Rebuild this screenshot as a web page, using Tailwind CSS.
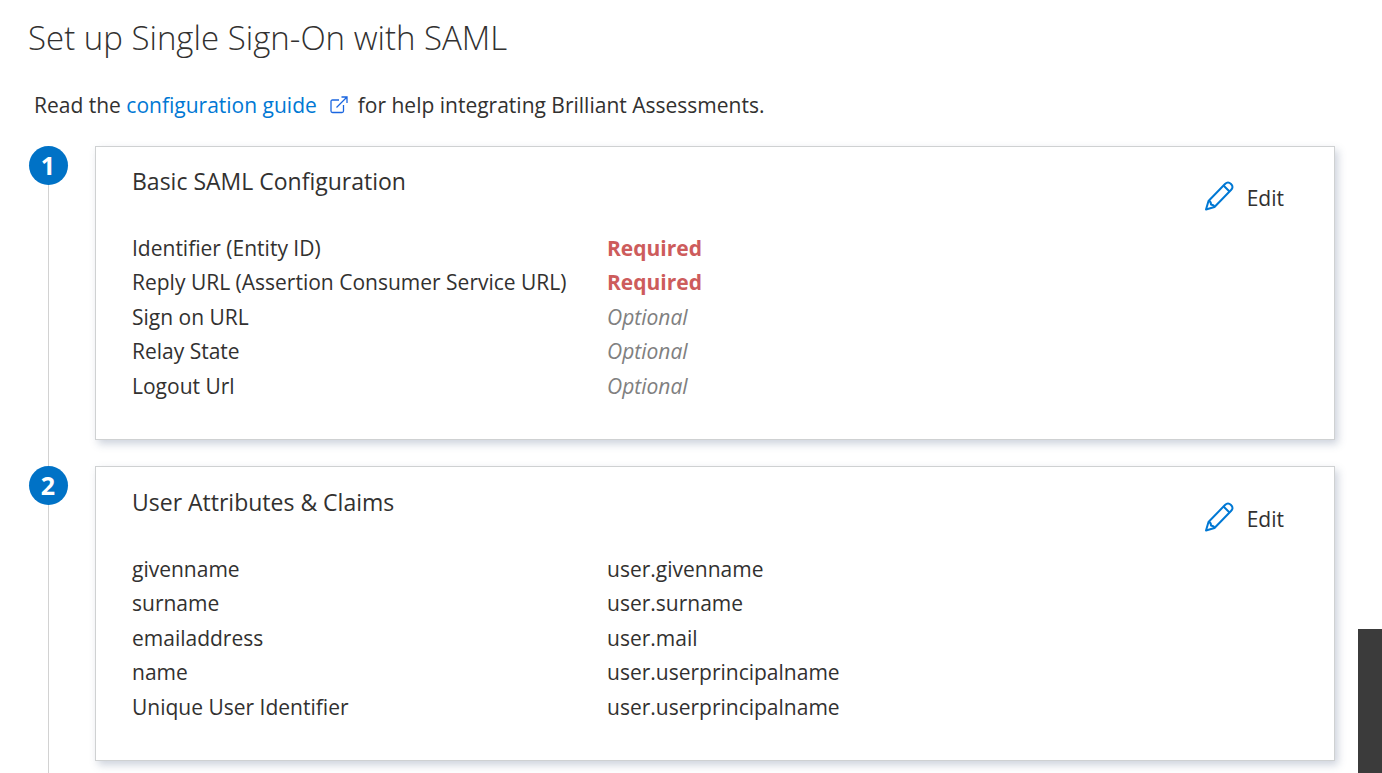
<!DOCTYPE html>
<html lang="en">
  <head>
    <meta charset="UTF-8" />
    <meta name="viewport" content="width=device-width, initial-scale=1.0" />
    <title>Set up Single Sign-On with SAML</title>
    <script src="https://cdn.jsdelivr.net/npm/@tailwindcss/browser@4"></script>
  </head>
  <body
    class="h-screen overflow-hidden bg-white font-['Segoe_UI','Open_Sans','Noto_Sans',sans-serif] text-[21px] text-[#323130]"
  >
    <main class="pt-3 pr-[47px] pl-7">
      <h1 class="text-[33px] leading-[52px] font-light">
        Set up Single Sign-On with SAML
      </h1>
      <p class="mt-6 pl-[6px] leading-[34px]">
        Read the
        <a href="#" class="text-[#0078d4]"
          >configuration guide
          <svg
            class="mr-1 ml-2 inline size-[18px] align-[-1px]"
            viewBox="0 0 18 18"
            fill="none"
            stroke="#1a66e0"
            stroke-width="1.3"
          >
            <path d="M9 4H2.500Q1 4 1 5.500V15Q1 16.500 2.500 16.500H12Q13.500 16.500 13.500 15V9" />
            <path d="M6.500 11.500 17 1M11.500 1H17V7" />
          </svg>
        </a>
        for help integrating Brilliant Assessments.
      </p>

      <ol class="mt-6">
        <li class="flex gap-[27px]">
          <div class="flex w-10 shrink-0 flex-col items-center">
            <span
              class="flex size-[39px] items-center justify-center rounded-full bg-[#0072c6] pb-0.5 text-[25px] leading-9 font-bold text-white"
              >1</span
            >
            <span class="w-px grow bg-[#d2d2d2]"></span>
          </div>
          <section
            class="mb-[26px] flex min-h-[294px] grow items-start justify-between border border-[#cfd1d2] bg-white pt-4 pr-[50px] pl-9 shadow-[3px_4px_8px_rgba(60,80,120,0.25)]"
          >
            <div>
              <h2 class="text-[23px] leading-9">Basic SAML Configuration</h2>
              <table class="mt-8 h-[173px] text-left">
                <tbody>
                  <tr>
                    <th class="w-[475px] p-0 font-normal">Identifier (Entity ID)</th>
                    <td class="p-0 font-bold text-[#cd5c5c]">Required</td>
                  </tr>
                  <tr>
                    <th class="p-0 font-normal">Reply URL (Assertion Consumer Service URL)</th>
                    <td class="p-0 font-bold text-[#cd5c5c]">Required</td>
                  </tr>
                  <tr>
                    <th class="p-0 font-normal">Sign on URL</th>
                    <td class="p-0 text-[#808080] italic">Optional</td>
                  </tr>
                  <tr>
                    <th class="p-0 font-normal">Relay State</th>
                    <td class="p-0 text-[#808080] italic">Optional</td>
                  </tr>
                  <tr>
                    <th class="p-0 font-normal">Logout Url</th>
                    <td class="p-0 text-[#808080] italic">Optional</td>
                  </tr>
                </tbody>
              </table>
            </div>
            <button type="button" class="mt-[18px] flex items-start gap-3 leading-[34px]">
              <svg
                class="size-[30px]"
                viewBox="0 0 30 30"
                fill="none"
                stroke="#0078d4"
                stroke-width="2"
                stroke-linejoin="round"
              >
                <path d="M1 28.500 3.500 20 20 3Q23 0 26 3Q29 6 26 9L9.500 26Z" />
                <path d="M3.500 20Q6 20 6 23.500Q9 24 9.500 26M18.500 4.500 24.500 10.500" />
              </svg>
              Edit
            </button>
          </section>
        </li>

        <li class="flex gap-[27px]">
          <div class="flex w-10 shrink-0 flex-col items-center">
            <span
              class="flex size-[39px] items-center justify-center rounded-full bg-[#0072c6] pb-0.5 text-[25px] leading-9 font-bold text-white"
              >2</span
            >
            <span class="w-px grow bg-[#d2d2d2]"></span>
          </div>
          <section
            class="mb-[26px] flex min-h-[295px] grow items-start justify-between border border-[#cfd1d2] bg-white pt-[17px] pr-[50px] pl-9 shadow-[3px_4px_8px_rgba(60,80,120,0.25)]"
          >
            <div>
              <h2 class="text-[23px] leading-9">User Attributes &amp; Claims</h2>
              <table class="mt-8 h-[173px] text-left">
                <tbody>
                  <tr>
                    <th class="w-[475px] p-0 font-normal">givenname</th>
                    <td class="p-0">user.givenname</td>
                  </tr>
                  <tr>
                    <th class="p-0 font-normal">surname</th>
                    <td class="p-0">user.surname</td>
                  </tr>
                  <tr>
                    <th class="p-0 font-normal">emailaddress</th>
                    <td class="p-0">user.mail</td>
                  </tr>
                  <tr>
                    <th class="p-0 font-normal">name</th>
                    <td class="p-0">user.userprincipalname</td>
                  </tr>
                  <tr>
                    <th class="p-0 font-normal">Unique User Identifier</th>
                    <td class="p-0">user.userprincipalname</td>
                  </tr>
                </tbody>
              </table>
            </div>
            <button type="button" class="mt-[18px] flex items-start gap-3 leading-[34px]">
              <svg
                class="size-[30px]"
                viewBox="0 0 30 30"
                fill="none"
                stroke="#0078d4"
                stroke-width="2"
                stroke-linejoin="round"
              >
                <path d="M1 28.500 3.500 20 20 3Q23 0 26 3Q29 6 26 9L9.500 26Z" />
                <path d="M3.500 20Q6 20 6 23.500Q9 24 9.500 26M18.500 4.500 24.500 10.500" />
              </svg>
              Edit
            </button>
          </section>
        </li>
      </ol>
    </main>

    <!-- dark panel over the bottom right corner -->
    <div class="fixed right-0 bottom-0 h-36 w-6 bg-[#3b3b3b]"></div>
  </body>
</html>
